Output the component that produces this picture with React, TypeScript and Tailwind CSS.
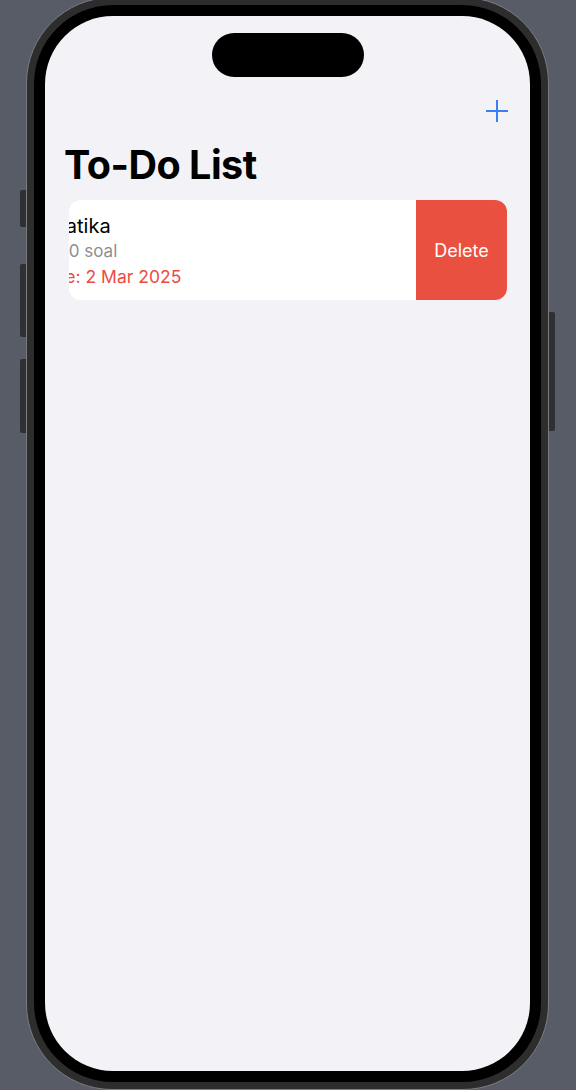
type Todo = {
  title: string;
  detail: string;
  due: string;
};

const todos: Todo[] = [
  { title: "Matematika", detail: "Tugas: 20 soal", due: "Deadline: 2 Mar 2025" },
];

function SideButtons() {
  return (
    <>
      <div className="absolute left-[20px] top-[190px] w-[6px] h-[37px] rounded-l-[2px] bg-[#2f3034]" />
      <div className="absolute left-[20px] top-[264px] w-[6px] h-[73px] rounded-l-[2px] bg-[#2f3034]" />
      <div className="absolute left-[20px] top-[359px] w-[6px] h-[74px] rounded-l-[2px] bg-[#2f3034]" />
      <div className="absolute left-[549px] top-[312px] w-[6px] h-[119px] rounded-r-[2px] bg-[#2f3034]" />
    </>
  );
}

function PlusIcon() {
  return (
    <svg width="22" height="22" viewBox="0 0 22 22" fill="none">
      <path d="M11 0.5v21M0.5 11h21" stroke="#3b7ef2" strokeWidth="2" strokeLinecap="round" />
    </svg>
  );
}

function TodoRow({ todo }: { todo: Todo }) {
  // row is swiped left, delete action showing
  return (
    <div className="flex h-[100px] rounded-[12px] overflow-hidden bg-white">
      <div className="flex-1 overflow-hidden relative">
        <div className="absolute top-0 left-[-68px] pt-[13px] flex flex-col whitespace-nowrap">
          <span className="text-[20px] leading-[26px] text-black">{todo.title}</span>
          <span className="text-[17px] leading-[25px] text-[#8e8e93] ml-[-1px]">{todo.detail}</span>
          <span className="text-[17.5px] leading-[25px] text-[#ea4c3f] ml-[2px]">{todo.due}</span>
        </div>
      </div>
      <button
        type="button"
        className="w-[91px] shrink-0 bg-[#ea5040] text-white text-[18px] flex items-center justify-center"
      >
        Delete
      </button>
    </div>
  );
}

export default function App() {
  return (
    <div
      className="relative w-[576px] h-[1090px] overflow-hidden bg-[#575c66]"
      style={{ fontFamily: "Inter, 'Noto Sans', sans-serif" }}
    >
      <SideButtons />
      <div className="absolute left-[26px] top-[-3px] w-[523px] h-[1093px] rounded-[86px] border border-[#7a7c80] bg-[#2d2d2e] p-[7px]">
        <div className="w-full h-full rounded-[79px] bg-black p-[11px]">
          <div className="relative w-full h-full rounded-[68px] overflow-hidden bg-[#f2f2f7]">
            {/* dynamic island */}
            <div className="absolute left-[167px] top-[17px] w-[152px] h-[44px] rounded-full bg-black" />

            <div className="flex flex-col pt-[84px]">
              <div className="flex justify-end pr-[22px]">
                <PlusIcon />
              </div>
              <h1 className="px-[19px] mt-[19px] text-[39.5px] leading-[48px] font-bold tracking-[-0.5px] text-black">
                To-Do List
              </h1>
              <div className="mt-[11px] pl-[24px] pr-[23px] flex flex-col gap-3">
                {todos.map((t) => (
                  <TodoRow key={t.title} todo={t} />
                ))}
              </div>
            </div>
          </div>
        </div>
      </div>
    </div>
  );
}
